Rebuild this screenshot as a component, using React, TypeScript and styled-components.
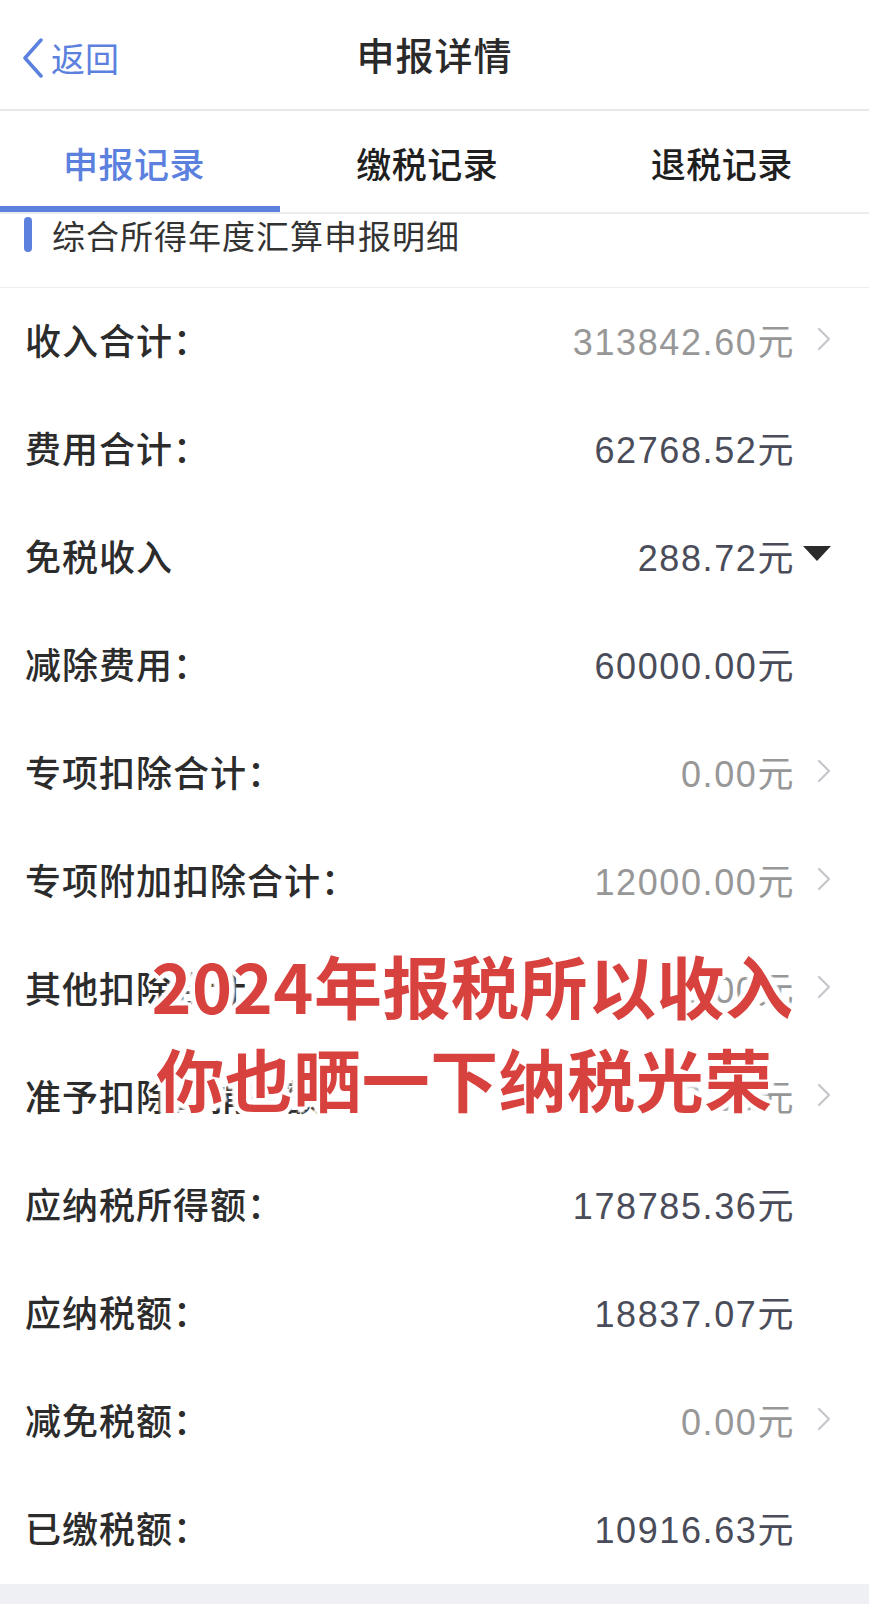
import React from 'react';
import styled, { createGlobalStyle } from 'styled-components';

type RowData = {
  label: string;
  value: string;
  muted?: boolean;
  accessory?: 'chevron' | 'caret';
};

const rows: RowData[] = [
  { label: '收入合计：', value: '313842.60元', muted: true, accessory: 'chevron' },
  { label: '费用合计：', value: '62768.52元' },
  { label: '免税收入', value: '288.72元', accessory: 'caret' },
  { label: '减除费用：', value: '60000.00元' },
  { label: '专项扣除合计：', value: '0.00元', muted: true, accessory: 'chevron' },
  { label: '专项附加扣除合计：', value: '12000.00元', muted: true, accessory: 'chevron' },
  { label: '其他扣除合计：', value: '0.00元', muted: true, accessory: 'chevron' },
  { label: '准予扣除的捐赠额：', value: '0.00元', muted: true, accessory: 'chevron' },
  { label: '应纳税所得额：', value: '178785.36元' },
  { label: '应纳税额：', value: '18837.07元' },
  { label: '减免税额：', value: '0.00元', muted: true, accessory: 'chevron' },
  { label: '已缴税额：', value: '10916.63元' },
];

const tabs = ['申报记录', '缴税记录', '退税记录'];

const App: React.FC = () => {
  return (
    <Page>
      <GlobalStyle />
      <NavBar>
        <BackButton>
          {backArrow}
          <span>返回</span>
        </BackButton>
        <NavTitle>申报详情</NavTitle>
      </NavBar>
      <TabBar>
        {tabs.map((tab, i) => (
          <Tab key={tab} active={i === 0}>
            {tab}
          </Tab>
        ))}
      </TabBar>
      <SectionHeader>
        <SectionMark />
        <SectionTitle>综合所得年度汇算申报明细</SectionTitle>
      </SectionHeader>
      <List>
        {rows.map((row) => (
          <Row key={row.label}>
            <RowLabel>{row.label}</RowLabel>
            <RowRight>
              <RowValue muted={row.muted}>{row.value}</RowValue>
              <Accessory>
                {row.accessory === 'chevron' && chevron}
                {row.accessory === 'caret' && <Caret />}
              </Accessory>
            </RowRight>
          </Row>
        ))}
        <Overlay>
          <OverlayLine shift={16}>2024年报税所以收入</OverlayLine>
          <OverlayLine shift={0}>你也晒一下纳税光荣</OverlayLine>
        </Overlay>
      </List>
      <BottomBand />
    </Page>
  );
};

export default App;

const GlobalStyle = createGlobalStyle`
  html, body {
    margin: 0;
    padding: 0;
    background: #ffffff;
  }
  body {
    font-family: "Noto Sans CJK SC", "Liberation Sans", sans-serif;
    -webkit-font-smoothing: antialiased;
  }
`;

const Page = styled.div`
  width: 869px;
  min-height: 1604px;
  display: flex;
  flex-direction: column;
  background: #ffffff;
  overflow: hidden;
`;

const NavBar = styled.div`
  position: relative;
  height: 109px;
  display: flex;
  align-items: center;
  justify-content: center;
  border-bottom: 2px solid #e8e8ea;
`;

const BackButton = styled.div`
  position: absolute;
  left: 22px;
  top: 38px;
  display: flex;
  align-items: center;
  gap: 7px;
  color: #5b80de;
  font-size: 34px;
  line-height: 40px;
`;

const NavTitle = styled.div`
  color: #2a2a2a;
  font-size: 38px;
  font-weight: 500;
  letter-spacing: 1px;
  margin-top: -2px;
`;

const TabBar = styled.div`
  height: 101px;
  display: grid;
  grid-template-columns: 280px 1fr 1fr;
  border-bottom: 2px solid #ececee;
`;

const Tab = styled.div<{ active?: boolean }>`
  display: flex;
  align-items: center;
  justify-content: center;
  padding-top: 8px;
  font-size: 35px;
  font-weight: 500;
  letter-spacing: 0.5px;
  color: ${({ active }) => (active ? '#5b80de' : '#1f1f1f')};
  border-bottom: 6px solid ${({ active }) => (active ? '#5b80de' : 'transparent')};
  padding-right: ${({ active }) => (active ? '12px' : '0')};
`;

const SectionHeader = styled.div`
  height: 74px;
  box-sizing: border-box;
  display: flex;
  align-items: flex-start;
  padding: 2px 0 0 24px;
  border-bottom: 1px solid #ededed;
`;

const SectionMark = styled.div`
  width: 8px;
  height: 35px;
  margin-top: 1px;
  border-radius: 4px;
  background: #5b80de;
`;

const SectionTitle = styled.div`
  margin-left: 20px;
  color: #333333;
  font-size: 33px;
  line-height: 38px;
  letter-spacing: 1px;
`;

const List = styled.div`
  position: relative;
  display: flex;
  flex-direction: column;
`;

const Row = styled.div`
  height: 108px;
  box-sizing: border-box;
  display: flex;
  align-items: center;
  justify-content: space-between;
  padding: 0 38px 6px 25px;
`;

const RowLabel = styled.div`
  color: #2c2c2c;
  font-size: 36px;
  font-weight: 500;
  letter-spacing: 1px;
`;

const RowRight = styled.div`
  display: flex;
  align-items: center;
`;

const RowValue = styled.div<{ muted?: boolean }>`
  font-family: "Liberation Sans", "Noto Sans CJK SC", sans-serif;
  font-size: 36px;
  letter-spacing: 1.6px;
  color: ${({ muted }) => (muted ? '#979797' : '#4a4d59')};
`;

const Accessory = styled.div`
  width: 36px;
  height: 30px;
  display: flex;
  align-items: center;
  justify-content: flex-end;
`;

const Caret = styled.div`
  width: 0;
  height: 0;
  margin-top: -4px;
  border-left: 14px solid transparent;
  border-right: 14px solid transparent;
  border-top: 15px solid #2b2b2b;
`;

const Overlay = styled.div`
  position: absolute;
  top: 650px;
  left: 60px;
  right: 0;
  display: flex;
  flex-direction: column;
  align-items: center;
  pointer-events: none;
`;

const OverlayLine = styled.div<{ shift: number }>`
  margin-left: ${({ shift }) => shift}px;
  color: #d8423e;
  font-family: "Noto Sans CJK SC", sans-serif;
  font-size: 68px;
  font-weight: 700;
  line-height: 93px;
  letter-spacing: 0.5px;
  text-shadow:
    3px 0 0 #fff, -3px 0 0 #fff, 0 3px 0 #fff, 0 -3px 0 #fff,
    3px 3px 0 #fff, -3px -3px 0 #fff, 3px -3px 0 #fff, -3px 3px 0 #fff,
    6px 0 2px #fff, -6px 0 2px #fff, 0 6px 2px #fff, 0 -6px 2px #fff;
`;

const BottomBand = styled.div`
  flex: 1;
  min-height: 19px;
  background: #eff0f4;
`;

const backArrow = (
  <svg width="22" height="40" viewBox="0 0 22 40" fill="none">
    <path
      d="M19 2L3 20L19 38"
      stroke="#5b80de"
      strokeWidth="3.5"
      strokeLinecap="round"
      strokeLinejoin="round"
    />
  </svg>
);

const chevron = (
  <svg width="14" height="24" viewBox="0 0 14 24" fill="none">
    <path
      d="M2 2L12 12L2 22"
      stroke="#c5c6cb"
      strokeWidth="2.2"
      strokeLinecap="round"
      strokeLinejoin="round"
    />
  </svg>
);
